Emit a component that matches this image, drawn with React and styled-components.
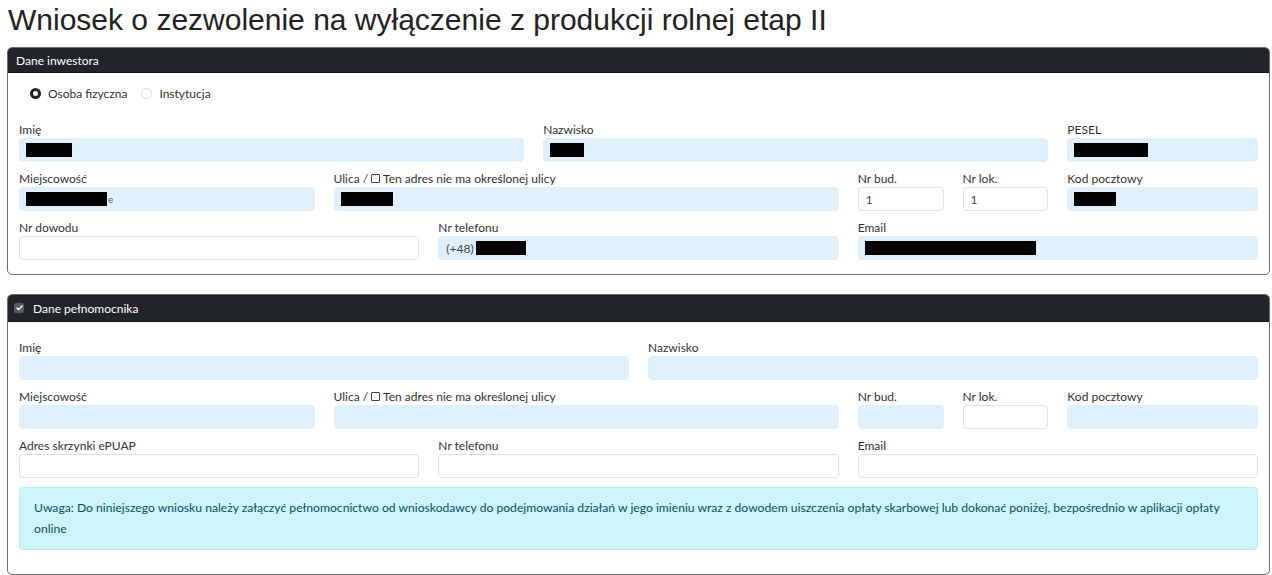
import React from "react";
import styled, { createGlobalStyle } from "styled-components";

const Global = createGlobalStyle`
  html, body { margin: 0; padding: 0; background: #fff; }
  body { font-family: Lato, "Open Sans", sans-serif; color: #333; }
  * { box-sizing: border-box; }
`;

const Page = styled.div`
  padding: 0 2px 0 7px;
`;

const Title = styled.h1`
  font-family: "Liberation Sans", Arial, sans-serif;
  font-weight: 400;
  font-size: 30px;
  line-height: 34px;
  color: #222;
  margin: 3px 0 10px 1px;
`;

const Card = styled.section`
  border: 1px solid #6b6b6b;
  border-radius: 5px;
  overflow: hidden;
  margin-bottom: 19px;
`;

const CardHeader = styled.div`
  background: #212529;
  color: #fff;
  font-size: 12px;
  height: ${(p) => p.$h}px;
  display: flex;
  align-items: center;
  gap: 9px;
  padding: 0 8px 0 ${(p) => p.$pl}px;
  border-bottom: 1px solid #111;
`;

const HeaderCheck = styled.span`
  width: 10px;
  height: 10px;
  border-radius: 2px;
  background: #555a60;
  display: inline-flex;
  align-items: center;
  justify-content: center;
`;

const CardBody = styled.div`
  padding: ${(p) => p.$pt}px 11px ${(p) => p.$pb}px 11px;
  display: flex;
  flex-direction: column;
  gap: 8px;
`;

const RadioRow = styled.div`
  display: flex;
  align-items: center;
  gap: 6px;
  padding-left: 11px;
  height: 16px;
  margin-bottom: 12px;
  font-size: 12px;
`;

const RadioLabel = styled.label`
  display: inline-flex;
  align-items: center;
  gap: 7px;
  color: #333;
  margin-right: 8px;
`;

const RadioDot = styled.span`
  width: 11px;
  height: 11px;
  border-radius: 50%;
  box-sizing: border-box;
  border: ${(p) => (p.$on ? "3px solid #222" : "1px solid #dcdcdc")};
  background: #fff;
`;

const Row = styled.div`
  display: grid;
  grid-template-columns: repeat(12, 1fr);
  column-gap: 19px;
`;

const Group = styled.div`
  grid-column: span ${(p) => p.$span};
  display: flex;
  flex-direction: column;
`;

const Label = styled.div`
  font-size: 12px;
  line-height: 15px;
  height: 17px;
  color: #333;
  white-space: nowrap;
  display: flex;
  align-items: center;
  gap: 2px;
`;

const SmallBox = styled.span`
  display: inline-block;
  width: 9px;
  height: 9px;
  border: 1px solid #444;
  border-radius: 1px;
  margin: 0 1px;
`;

const Control = styled.div`
  height: 24px;
  border-radius: 4px;
  border: 1px solid ${(p) => (p.$ro ? "#dfeffb" : "#dee2e6")};
  background: ${(p) => (p.$ro ? "#dfeffb" : "#fff")};
  font-size: 12px;
  color: #444;
  display: flex;
  align-items: center;
  padding: 0 5px 0 7px;
  overflow: hidden;
  white-space: nowrap;
`;

const Redact = styled.span`
  display: inline-block;
  width: ${(p) => p.$w}px;
  height: 14px;
  margin-left: ${(p) => p.$ml || -1}px;
  background: #000;
`;

const Tail = styled.span`
  color: #666;
  font-size: 10px;
  margin-left: 1px;
`;

const Alert = styled.div`
  background: #cff4fc;
  border: 1px solid #b2eefa;
  border-radius: 4px;
  color: #055160;
  font-size: 12.15px;
  line-height: 21px;
  padding: 9px 14px 10px 14px;
  margin-top: 1px;
`;

const Check = () => (
  <svg width="7" height="6" viewBox="0 0 8 7">
    <path d="M1 3.6 L3 5.4 L7 1.2" stroke="#fff" strokeWidth="1.6" fill="none" strokeLinecap="round" strokeLinejoin="round" />
  </svg>
);

const F = ({ span, label, ro, children }) => (
  <Group $span={span}>
    <Label>{label}</Label>
    <Control $ro={ro}>{children}</Control>
  </Group>
);

const UlicaLabel = () => (
  <>
    Ulica /<SmallBox /> Ten adres nie ma określonej ulicy
  </>
);

export default function App() {
  return (
    <Page>
      <Global />
      <Title>Wniosek o zezwolenie na wyłączenie z produkcji rolnej etap II</Title>

      <Card>
        <CardHeader $h={25} $pl={8}>Dane inwestora</CardHeader>
        <CardBody $pt={12} $pb={14}>
          <RadioRow>
            <RadioLabel>
              <RadioDot $on />
              Osoba fizyczna
            </RadioLabel>
            <RadioLabel>
              <RadioDot />
              Instytucja
            </RadioLabel>
          </RadioRow>
          <Row>
            <F span={5} label="Imię" ro>
              <Redact $w={46} />
            </F>
            <F span={5} label="Nazwisko" ro>
              <Redact $w={34} />
            </F>
            <F span={2} label="PESEL" ro>
              <Redact $w={74} />
            </F>
          </Row>
          <Row>
            <F span={3} label="Miejscowość" ro>
              <Redact $w={81} />
              <Tail>e</Tail>
            </F>
            <F span={5} label={<UlicaLabel />} ro>
              <Redact $w={52} />
            </F>
            <F span={1} label="Nr bud.">1</F>
            <F span={1} label="Nr lok.">1</F>
            <F span={2} label="Kod pocztowy" ro>
              <Redact $w={42} />
            </F>
          </Row>
          <Row>
            <F span={4} label="Nr dowodu" />
            <F span={4} label="Nr telefonu" ro>
              (+48)
              <Redact $w={50} $ml={2} />
            </F>
            <F span={4} label="Email" ro>
              <Redact $w={171} />
            </F>
          </Row>
        </CardBody>
      </Card>

      <Card>
        <CardHeader $h={27} $pl={6}>
          <HeaderCheck>
            <Check />
          </HeaderCheck>
          Dane pełnomocnika
        </CardHeader>
        <CardBody $pt={17} $pb={24}>
          <Row>
            <F span={6} label="Imię" ro />
            <F span={6} label="Nazwisko" ro />
          </Row>
          <Row>
            <F span={3} label="Miejscowość" ro />
            <F span={5} label={<UlicaLabel />} ro />
            <F span={1} label="Nr bud." ro />
            <F span={1} label="Nr lok." />
            <F span={2} label="Kod pocztowy" ro />
          </Row>
          <Row>
            <F span={4} label="Adres skrzynki ePUAP" />
            <F span={4} label="Nr telefonu" />
            <F span={4} label="Email" />
          </Row>
          <Alert>
            Uwaga: Do niniejszego wniosku należy załączyć pełnomocnictwo od wnioskodawcy do podejmowania działań w jego
            imieniu wraz z dowodem uiszczenia opłaty skarbowej lub dokonać poniżej, bezpośrednio w aplikacji opłaty online
          </Alert>
        </CardBody>
      </Card>
    </Page>
  );
}
